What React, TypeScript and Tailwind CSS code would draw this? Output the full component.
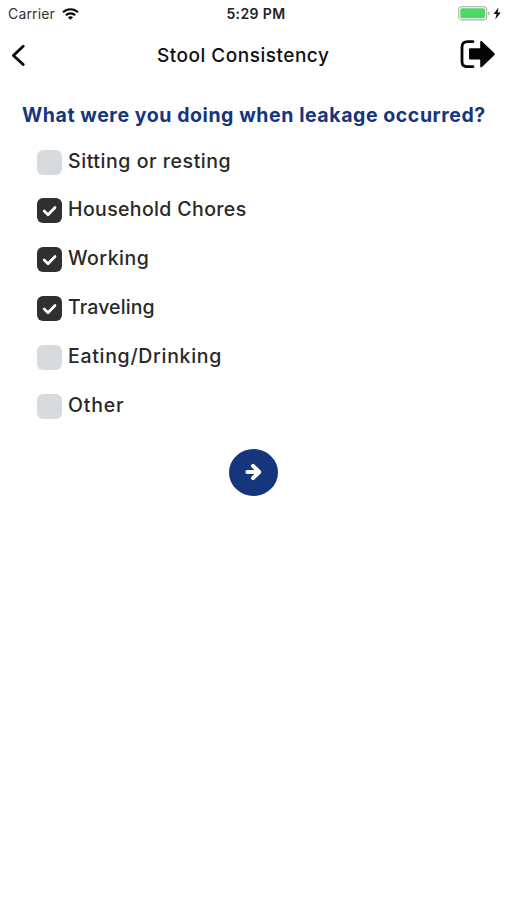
const options = [
  { label: 'Sitting or resting', checked: false, spacing: 'tracking-[0.56px]' },
  { label: 'Household Chores', checked: true, spacing: 'tracking-[0.37px]' },
  { label: 'Working', checked: true, spacing: 'tracking-[0.5px]' },
  { label: 'Traveling', checked: true, spacing: 'tracking-[0.1px]' },
  { label: 'Eating/Drinking', checked: false, spacing: 'tracking-[0.7px]' },
  { label: 'Other', checked: false, spacing: 'tracking-[0.8px]' },
];

function StatusBar() {
  return (
    <div className="grid h-7 grid-cols-3 items-center pl-2 pr-[5px]">
      <div className="flex items-center gap-[7px] text-[#333]">
        <span className="text-[14px] leading-7 tracking-[0.15px]">Carrier</span>
        <svg width="17" height="13" viewBox="0 0 17 13" fill="none" stroke="#080808" strokeWidth="2.2">
          <path d="M1 4.3C5.2 .2 11.8 .2 16 4.3" />
          <path d="M3.8 7.2c2.6-2.5 6.8-2.5 9.4 0" />
          <path d="M8.5 11.8 5.9 9.3c1.4-1.3 3.8-1.3 5.2 0z" fill="#080808" stroke="none" />
        </svg>
      </div>
      <span className="whitespace-nowrap pl-0.5 text-center text-[14px] font-semibold leading-7 tracking-[0.4px] text-[#222]">5:29 PM</span>
      <svg className="justify-self-end" width="44" height="16" viewBox="0 0 44 16">
        <rect x=".7" y=".7" width="28" height="13.2" rx="3.2" fill="#fff" stroke="#aaa" strokeWidth="1.1" />
        <rect x="2.3" y="2.3" width="24.8" height="10" rx="1.8" fill="#4cd964" />
        <path d="M30.3 5.2c1.8.6 1.8 3.6 0 4.2z" fill="#999" />
        <path d="M40.5 1.5 35.6 8h3L37.2 13.5l5.7-7h-3.2z" fill="#111" />
      </svg>
    </div>
  );
}

function Checkbox({ checked }: { checked: boolean }) {
  return (
    <span className={checked ? 'flex size-[25px] shrink-0 items-center justify-center rounded-[6px] bg-[#303030]' : 'size-[25px] shrink-0 rounded-[6px] bg-[#d7dbde]'}>
      {checked && (
        <svg width="25" height="25" viewBox="0 0 25 25" fill="none" stroke="#fff" strokeWidth="2.7" strokeLinecap="round" strokeLinejoin="round">
          <path d="m7.2 13 3.8 3.8 7-7.3" />
        </svg>
      )}
    </span>
  );
}

export default function App() {
  return (
    <main className="min-h-[900px] w-full bg-white font-['Inter',sans-serif]">
      <StatusBar />
      <header className="flex h-[54px] items-center pl-[11px] pr-[11px]">
        <svg width="34" height="24" viewBox="0 0 34 24" fill="none" stroke="#080808" strokeWidth="2.9" strokeLinecap="round" strokeLinejoin="round">
          <path d="M12.2 3.2 2.4 12.5l9.8 9" />
        </svg>
        <h1 className="ml-28 whitespace-nowrap pt-0.5 text-[19px] font-medium leading-7 tracking-[0.5px] text-[#111]">Stool Consistency</h1>
        <svg className="ml-auto" width="36" height="30" viewBox="0 0 36 30">
          <path d="M13 1.7H7.5Q2 1.7 2 7v14.7q0 5 5.5 5H13" fill="none" stroke="#050505" strokeWidth="2.8" strokeLinecap="round" />
          <path d="M9 9.2q0-1 1-1h10.2V2.4q0-2.6 2-1l12 11.6q1.2 1.1 0 2.2l-12 11.6q-2 1.6-2-1v-6.3H10q-1 0-1-1z" fill="#050505" />
        </svg>
      </header>
      <h2 className="mt-[19px] whitespace-nowrap pl-[22px] text-[19.5px] font-bold leading-7 tracking-[0.57px] text-[#15357d]">What were you doing when leakage occurred?</h2>
      <ul className="mt-[20.6px] flex flex-col gap-[23.8px] pl-[37px]">
        {options.map((option) => (
          <li key={option.label} className="flex h-[25px] gap-1.5">
            <Checkbox checked={option.checked} />
            <span className={`-mt-px h-6 whitespace-nowrap text-[19.5px] font-medium leading-6 text-[#292929] ${option.spacing}`}>{option.label}</span>
          </li>
        ))}
      </ul>
      <button aria-label="Next" className="mx-auto mt-[30.4px] flex h-[47px] w-[49px] items-center justify-center rounded-[50%] bg-[#15357d]">
        <svg width="18" height="20" viewBox="0 0 18 20" fill="none" stroke="#fff" strokeWidth="4" strokeLinecap="round" strokeLinejoin="round">
          <path d="M2.3 10H14M8 3.8l6.2 6.2L8 16.2" />
        </svg>
      </button>
    </main>
  );
}
